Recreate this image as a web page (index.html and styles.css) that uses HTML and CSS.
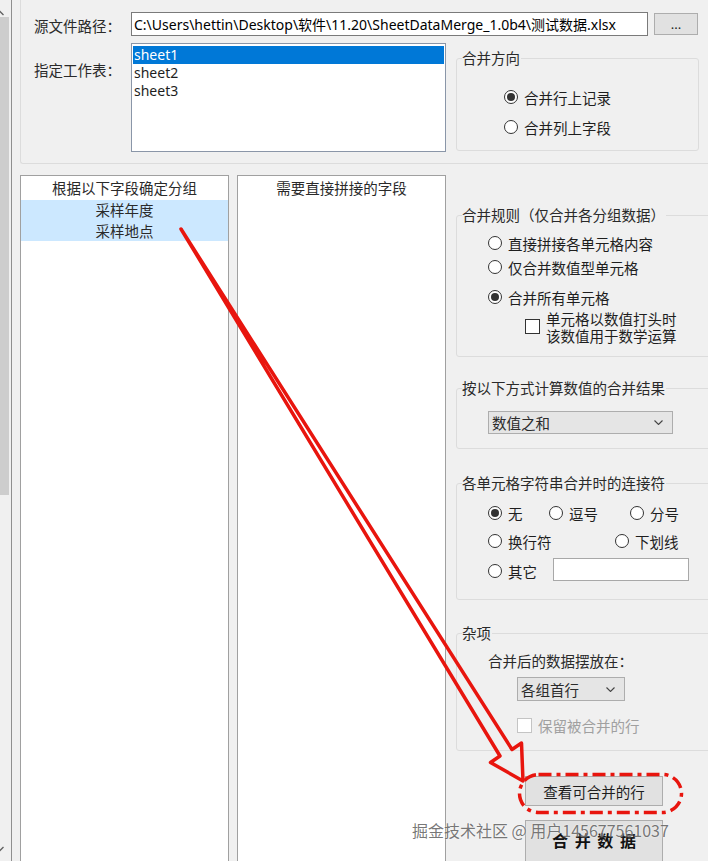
FILE: index.html
```html
<!DOCTYPE html>
<html lang="zh-CN">
<head>
    <meta charset="UTF-8">
    <meta name="viewport" content="width=device-width, initial-scale=1.0">
    <title>SheetDataMerge</title>
    <link rel="stylesheet" href="styles.css">
</head>
<body>
<div class="window">
    <div class="scrollbar">
        <svg class="sb-arrow" width="8" height="6" viewBox="0 0 8 6"><polyline points="0.5,5 4,1.5 7.5,5"/></svg>
        <div class="sb-thumb"></div>
        <svg class="sb-arrow sb-down" width="8" height="6" viewBox="0 0 8 6"><polyline points="0.5,1 4,4.5 7.5,1"/></svg>
    </div>

    <div class="main">
        <div class="source-box">
            <div class="form-row">
                <label class="row-label" for="path">源文件路径：</label>
                <input class="text-input path-input" id="path" type="text" value="C:\Users\hettin\Desktop\软件\11.20\SheetDataMerge_1.0b4\测试数据.xlsx">
                <button class="btn browse-btn">...</button>
            </div>
            <div class="form-row sheet-row">
                <label class="row-label sheet-label">指定工作表：</label>
                <ul class="listbox">
                    <li class="selected">sheet1</li>
                    <li>sheet2</li>
                    <li>sheet3</li>
                </ul>
                <fieldset class="group direction-group">
                    <legend>合并方向</legend>
                    <div class="group-body">
                        <label class="opt"><span class="radio on"></span>合并行上记录</label>
                        <label class="opt gap6"><span class="radio"></span>合并列上字段</label>
                    </div>
                </fieldset>
            </div>
        </div>

        <div class="lower">
            <div class="field-list">
                <div class="field-head">根据以下字段确定分组</div>
                <div class="field-item selected">采样年度</div>
                <div class="field-item selected">采样地点</div>
            </div>
            <div class="field-list">
                <div class="field-head">需要直接拼接的字段</div>
            </div>

            <div class="options">
                <fieldset class="group rule-group">
                    <legend>合并规则（仅合并各分组数据）</legend>
                    <div class="group-body">
                        <label class="opt"><span class="radio"></span>直接拼接各单元格内容</label>
                        <label class="opt"><span class="radio"></span>仅合并数值型单元格</label>
                        <label class="opt gap6"><span class="radio on"></span>合并所有单元格</label>
                        <label class="sub-check">
                            <span class="check"></span>
                            <span class="sub-text"><span>单元格以数值打头时</span><span>该数值用于数学运算</span></span>
                        </label>
                    </div>
                </fieldset>

                <fieldset class="group calc-group">
                    <legend>按以下方式计算数值的合并结果</legend>
                    <div class="group-body">
                        <div class="combo calc-combo">
                            <span>数值之和</span>
                            <svg width="9" height="5" viewBox="0 0 9 5"><polyline points="0.5,0.5 4.5,4.5 8.5,0.5"/></svg>
                        </div>
                    </div>
                </fieldset>

                <fieldset class="group joiner-group">
                    <legend>各单元格字符串合并时的连接符</legend>
                    <div class="group-body">
                        <div class="opt-row">
                            <label class="opt w61"><span class="radio on"></span>无</label>
                            <label class="opt w81"><span class="radio"></span>逗号</label>
                            <label class="opt"><span class="radio"></span>分号</label>
                        </div>
                        <div class="opt-row gap4">
                            <label class="opt w127"><span class="radio"></span>换行符</label>
                            <label class="opt"><span class="radio"></span>下划线</label>
                        </div>
                        <div class="opt-row gap6">
                            <label class="opt w65"><span class="radio"></span>其它</label>
                            <input class="text-input other-input" type="text">
                        </div>
                    </div>
                </fieldset>

                <fieldset class="group misc-group">
                    <legend>杂项</legend>
                    <div class="group-body">
                        <div class="misc-label">合并后的数据摆放在：</div>
                        <div class="combo place-combo">
                            <span>各组首行</span>
                            <svg width="9" height="5" viewBox="0 0 9 5"><polyline points="0.5,0.5 4.5,4.5 8.5,0.5"/></svg>
                        </div>
                        <label class="keep-row"><span class="check disabled"></span>保留被合并的行</label>
                    </div>
                </fieldset>

                <button class="btn action-btn preview-btn">查看可合并的行</button>
                <button class="btn action-btn merge-btn">合 并 数 据</button>
            </div>
        </div>
    </div>

    <svg class="annotation" width="708" height="861" viewBox="0 0 708 861">
        <polygon class="arrow" points="181,229 500,756 490.5,762.5 523,781 521.5,743 512,749.5"/>
        <rect class="ring" x="519.5" y="774.5" width="162" height="38" rx="19" ry="19"/>
    </svg>
    <div class="watermark">掘金技术社区 @ 用户145677561037</div>
</div>
</body>
</html>
```

FILE: styles.css
```css
* {
    box-sizing: border-box;
}
html, body {
    margin: 0;
    height: 100%;
}
body {
    background-color: #f0f0f0;
    font-family: "Noto Sans CJK SC", sans-serif;
    font-size: 14.5px;
    color: #1e1e1e;
    overflow: hidden;
}
.window {
    position: relative;
    display: flex;
    width: 708px;
    height: 861px;
    overflow: hidden;
}

/* left scrollbar, cut off at the edge */
.scrollbar {
    flex: none;
    width: 12px;
    border-right: 1px solid #8f8f8f;
    display: flex;
    flex-direction: column;
}
.sb-arrow {
    margin: 10px 0 0 -4px;
    fill: none;
    stroke: #606060;
    stroke-width: 1.3;
}
.sb-thumb {
    margin-top: 1px;
    width: 9px;
    height: 478px;
    background-color: #cdcdcd;
}
.sb-down {
    margin-top: auto;
    margin-bottom: 9px;
}

.main {
    flex: 1;
    padding-left: 8px;
}

/* source file block */
.source-box {
    height: 164px;
    border-left: 1px solid #dcdcdc;
    border-bottom: 1px solid #dcdcdc;
    border-bottom-left-radius: 3px;
    padding: 12px 0 0 13px;
}
.form-row {
    display: flex;
    align-items: flex-start;
}
.row-label {
    width: 97px;
    flex: none;
    line-height: 18px;
    padding-top: 5px;
    color: #2a2a2a;
}
.sheet-label {
    padding-top: 18px;
}
.text-input {
    height: 24px;
    border: 1px solid #7a7a7a;
    background: #fff;
    font-family: "Noto Sans", "Noto Sans CJK SC", sans-serif;
    font-size: 14px;
    color: #000;
    padding: 0 2px;
    margin: 0;
    outline: none;
}
.path-input {
    width: 517px;
}
.btn {
    background-color: #e1e1e1;
    border: 1px solid #adadad;
    font-family: "Noto Sans CJK SC", sans-serif;
    font-size: 14.5px;
    color: #1e1e1e;
    padding: 0;
    margin: 0;
}
.browse-btn {
    margin: 1px 0 0 6px;
    width: 44px;
    height: 22px;
    font-family: "Noto Sans", sans-serif;
    font-size: 13px;
    line-height: 14px;
}
.sheet-row {
    margin-top: 7px;
}
.listbox {
    list-style: none;
    margin: 0;
    width: 315px;
    height: 109px;
    padding: 2px 1px;
    background: #fff;
    border: 1px solid #8a96a8;
    font-family: "Noto Sans", sans-serif;
    font-size: 14px;
    flex: none;
}
.listbox li {
    height: 18px;
    line-height: 18px;
    padding-left: 1px;
}
.listbox li.selected {
    background-color: #0078d7;
    color: #fff;
}

/* group boxes */
.group {
    margin: 0;
    padding: 0;
    border: 1px solid #dcdcdc;
    border-radius: 3px;
}
.group legend {
    margin-left: 5px;
    padding: 0 1px 0 0;
    line-height: 18px;
    color: #2a2a2a;
}
.group-body {
    padding-left: 31px;
}
.direction-group {
    margin: 6px 0 0 10px;
    width: 243px;
    padding: 18px 0 11px 0;
}
.direction-group .group-body {
    padding-left: 47px;
}

.opt {
    display: flex;
    align-items: center;
    height: 24px;
    white-space: nowrap;
}
.gap4 {
    margin-top: 4px;
}
.gap6 {
    margin-top: 6px;
}
.radio {
    flex: none;
    width: 14px;
    height: 14px;
    border: 1px solid #333;
    border-radius: 50%;
    background: #fff;
    margin-right: 6px;
    display: flex;
    align-items: center;
    justify-content: center;
}
.radio.on::after {
    content: "";
    width: 8px;
    height: 8px;
    border-radius: 50%;
    background: #333;
}
.check {
    flex: none;
    width: 15px;
    height: 15px;
    border: 1px solid #333;
    background: #fff;
}
.check.disabled {
    border-color: #c4c4c4;
}

/* lower part */
.lower {
    margin-top: 11px;
    display: flex;
    gap: 8px;
}
.field-list {
    flex: none;
    width: 209px;
    height: 700px;
    background: #fff;
    border: 1px solid #a0a0a0;
}
.field-head {
    height: 24px;
    line-height: 24px;
    text-align: center;
    color: #2a2a2a;
}
.field-item {
    height: 20.5px;
    line-height: 20.5px;
    text-align: center;
    color: #2a2a2a;
}
.field-item.selected {
    background-color: #cce8ff;
}

.options {
    flex: none;
    width: 262px;
    margin-left: -8px;
    padding-left: 10px;
}
.options .group {
    width: 262px;
}
.rule-group {
    margin-top: 31px;
    padding-top: 7px;
    padding-bottom: 12px;
}
.sub-check {
    display: flex;
    margin: 2px 0 0 37px;
}
.sub-check .check {
    margin-top: 8px;
    margin-right: 6px;
}
.sub-text {
    display: flex;
    flex-direction: column;
    gap: 1px;
}
.sub-text span {
    height: 16px;
    line-height: 16px;
}
.calc-group {
    margin-top: 22px;
    padding-top: 14px;
    padding-bottom: 14px;
}
.combo {
    display: flex;
    align-items: center;
    justify-content: space-between;
    background-color: #e5e5e5;
    border: 1px solid #adadad;
    padding: 0 9px 0 3px;
    color: #2a2a2a;
}
.combo svg {
    fill: none;
    stroke: #444;
    stroke-width: 1.1;
}
.calc-combo {
    width: 185px;
    height: 23px;
}
.joiner-group {
    margin-top: 25px;
    padding-top: 9px;
    padding-bottom: 16px;
}
.opt-row {
    display: flex;
    align-items: center;
}
.w61 { width: 61px; }
.w65 { width: 65px; }
.w81 { width: 81px; }
.w127 { width: 127px; }
.other-input {
    width: 136px;
    height: 23px;
    border-color: #a8a8a8;
    margin-top: -3px;
}
.misc-group {
    margin-top: 24px;
    padding-top: 10px;
    padding-bottom: 15px;
}
.misc-label {
    line-height: 18px;
    color: #2a2a2a;
}
.place-combo {
    margin: 7px 0 0 29px;
    width: 108px;
    height: 24px;
}
.keep-row {
    display: flex;
    align-items: center;
    height: 20px;
    margin: 14px 0 0 29px;
    color: #a0a0a0;
}
.keep-row .check {
    margin-right: 6px;
}
.action-btn {
    display: block;
    margin-left: 69px;
    width: 138px;
}
.preview-btn {
    margin-top: 25px;
    height: 30px;
}
.merge-btn {
    margin-top: 14px;
    height: 46px;
    font-size: 16px;
    font-weight: bold;
    word-spacing: 3px;
    padding-bottom: 6px;
    color: #111;
}

/* red markup drawn over the screenshot */
.annotation {
    position: absolute;
    left: 0;
    top: 0;
    pointer-events: none;
}
.arrow {
    fill: none;
    stroke: #e8150e;
    stroke-width: 3.5;
    stroke-linejoin: round;
}
.ring {
    fill: none;
    stroke: #e8150e;
    stroke-width: 3.5;
    stroke-dasharray: 13 5 4 5;
}
.watermark {
    position: absolute;
    left: 412px;
    top: 819px;
    font-size: 16px;
    line-height: 22px;
    white-space: nowrap;
    color: rgba(95, 95, 95, 0.85);
    text-shadow: 0 0 2px rgba(255, 255, 255, 0.9);
}
```
